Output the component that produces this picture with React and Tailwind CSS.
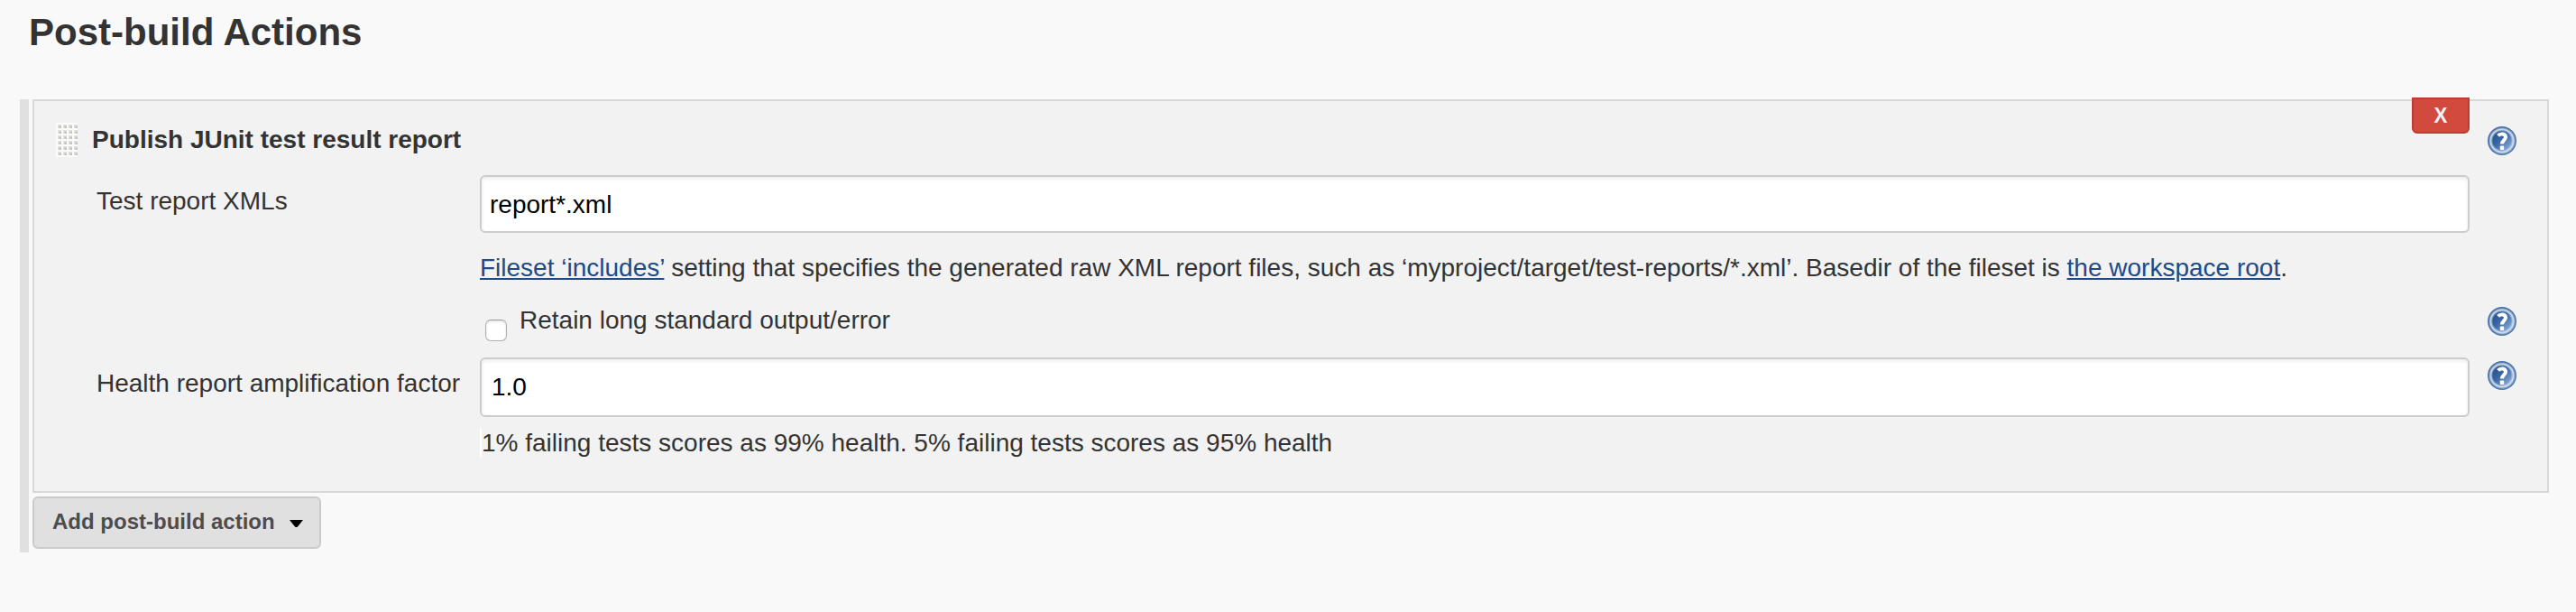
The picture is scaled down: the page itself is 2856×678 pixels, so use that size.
function HelpIcon({ id, className }) {
  return (
    <svg viewBox="0 0 32 32" className={"h-8 w-8 shrink-0 " + className} role="img" aria-label="Help">
      <defs>
        <linearGradient id={id + "-rim"} x1="0" y1="0" x2="1" y2="1">
          <stop offset="0" stopColor="#3f6aa3" />
          <stop offset="1" stopColor="#547db3" />
        </linearGradient>
        <linearGradient id={id + "-disc"} x1="0.1" y1="0.1" x2="0.9" y2="0.9">
          <stop offset="0" stopColor="#214b88" />
          <stop offset="0.45" stopColor="#3b68a4" />
          <stop offset="1" stopColor="#8fb3dc" />
        </linearGradient>
      </defs>
      <circle cx="16" cy="16" r="16" fill={"url(#" + id + "-rim)"} />
      <circle cx="16" cy="16" r="12.4" fill={"url(#" + id + "-disc)"} />
      <circle cx="16" cy="16" r="12.6" fill="none" stroke="#dbe5f1" strokeOpacity="0.4" strokeWidth="4" />
      <circle cx="16" cy="16" r="12.6" fill="none" stroke="#dbe5f1" strokeOpacity="0.8" strokeWidth="1.7" />
      <path
        d="M11.6 10.4C14 7.6 20 7.8 20 12C20 15.2 16 15.4 16 19.6"
        fill="none"
        stroke="#fff"
        strokeWidth="4"
      />
      <rect x="13.8" y="21.6" width="4.4" height="4.4" rx="0.8" fill="#fff" />
    </svg>
  );
}

function Grip() {
  const cells = [];
  for (let row = 0; row < 6; row++) {
    for (let col = 0; col < 4; col++) {
      cells.push([2 + col * 6, 2 + row * 6]);
    }
  }
  return (
    <svg viewBox="0 0 24 38" className="mt-6 ml-6 h-[38px] w-6 shrink-0">
      <rect width="24" height="38" fill="#fbfbf9" />
      {cells.map(([x, y]) => (
        <g key={x + "-" + y}>
          <rect x={x} y={y} width="4" height="4" fill="#e0e0dd" />
          <rect x={x + 1.5} y={y + 1.5} width="2.5" height="2.5" fill="#c2c2c0" />
        </g>
      ))}
    </svg>
  );
}

const inputStyle =
  "min-w-0 flex-1 rounded-[6px] border-2 border-[#cccccc] bg-white text-[28px] leading-[31px] text-black shadow-[inset_0_2px_4px_rgba(0,0,0,0.08)] outline-none";

export default function App() {
  return (
    <main className="h-[678px] w-[2856px] overflow-hidden bg-[#f9f9f9] pt-3 font-['Liberation_Sans',Arial,sans-serif] text-[28px] leading-[31px] text-[#333333]">
      <h1 className="ml-8 h-[98px] text-[42px] leading-[47px] font-bold">Post-build Actions</h1>

      <section className="ml-[22px] flex items-start gap-1">
        <div className="h-[502px] w-[10px] bg-[#e0e0e0]" />

        <div>
          <div className="h-[436px] w-[2790px] border-2 border-[#d8d8d8] bg-[#f2f2f2]">
            <div className="flex h-[82px] items-start">
              <Grip />
              <h2 className="mt-[27px] ml-4 font-bold">Publish JUnit test result report</h2>
              <button className="-mt-1 ml-auto flex h-10 w-16 items-start justify-center rounded-b-[6px] border-2 border-[#bf3b30] bg-[#d14a3d] pt-1 text-[24px] leading-[27px] font-bold text-[#f2f2f2]">
                <span className="inline-block scale-x-[0.93]">X</span>
              </button>
              <HelpIcon id="junit" className="mt-7 mr-[34px] ml-5" />
            </div>

            <div className="flex h-16 items-start">
              <label className="w-[494px] shrink-0 pt-[13px] pl-[69px]">Test report XMLs</label>
              <input className={inputStyle + " mr-[86px] h-16 pt-px pl-[9px]"} defaultValue="report*.xml" />
            </div>

            <p className="mt-[23px] ml-[494px] whitespace-nowrap">
              <a className="text-[#204a87] underline decoration-2 underline-offset-2">Fileset ‘includes’</a> setting that
              specifies the generated raw XML report files, such as ‘myproject/target/test-reports/*.xml’. Basedir of
              the fileset is <a className="text-[#204a87] underline decoration-2 underline-offset-2">the workspace root</a>.
            </p>

            <div className="flex h-[84px] items-start">
              <input
                type="checkbox"
                className="mt-[42px] ml-[500px] h-6 w-6 appearance-none rounded-[6px] border border-[#b0b0b0] border-t-[#9c9c9c] bg-white shadow-[inset_0_1px_3px_rgba(0,0,0,0.14)]"
              />
              <label className="mt-[27px] ml-[14px]">Retain long standard output/error</label>
              <HelpIcon id="retain" className="mt-7 mr-[34px] ml-auto" />
            </div>

            <div className="flex h-[66px] items-start">
              <label className="w-[494px] shrink-0 pt-[13px] pl-[69px] whitespace-nowrap">
                Health report amplification factor
              </label>
              <input className={inputStyle + " h-[66px] pb-px pl-[11px]"} defaultValue="1.0" />
              <HelpIcon id="health" className="mt-1 mr-[34px] ml-5" />
            </div>

            <div className="mt-[14px] ml-[494px] h-8 border-l-2 border-white">
              <p className="-mt-px">1% failing tests scores as 99% health. 5% failing tests scores as 95% health</p>
            </div>
          </div>

          <button className="mt-1 flex h-[58px] w-[320px] items-start rounded-[6px] border-2 border-[#cacaca] bg-[#e0e0e0] pt-3 pl-5 text-[24px] leading-[27px] font-bold text-[#4d4d4d]">
            Add post-build action
            <svg viewBox="0 0 15 8" className="mt-3 ml-4 h-2 w-[15px]">
              <path d="M0 0H15L9 7.5Q7.5 8.5 6 7.5Z" fill="#000" />
            </svg>
          </button>
        </div>
      </section>
    </main>
  );
}
